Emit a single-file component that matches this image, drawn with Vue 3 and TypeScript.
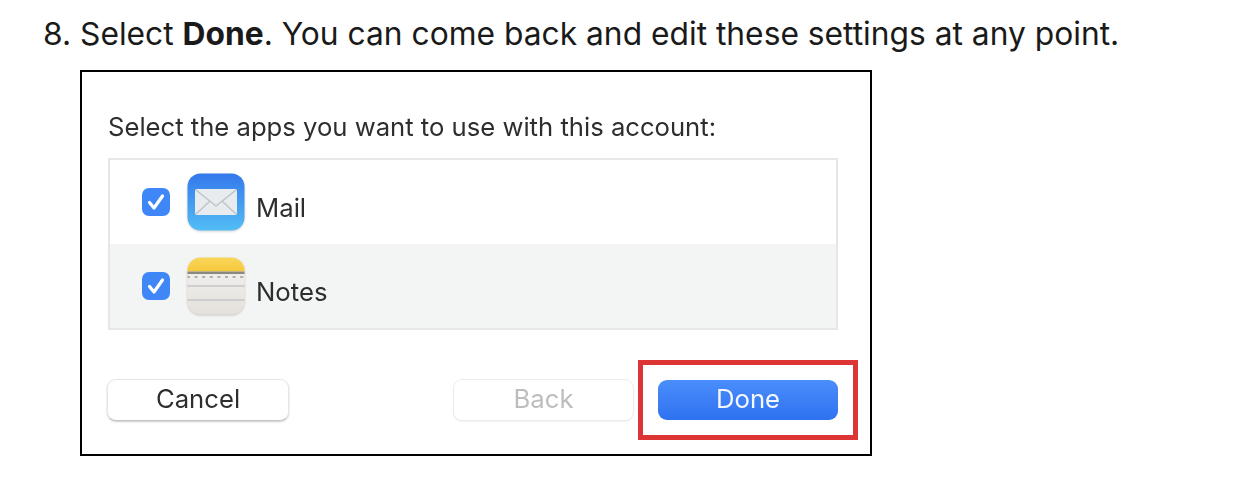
<template>
  <div class="page">
    <p class="step">
      <span class="num">8.</span> Select <strong>Done</strong>. You can come back and edit these settings at any point.
    </p>
    <div class="shot">
      <div class="dialog">
        <div class="prompt">Select the apps you want to use with this account:</div>
        <div class="app-list">
          <div v-for="app in apps" :key="app.name" class="app-row">
            <span class="check">
              <svg width="24" height="24" viewBox="0 0 24 24">
                <path d="M5.5 12.5 L10 18 L18.5 6" fill="none" stroke="#fff" stroke-width="3.2" stroke-linecap="round" stroke-linejoin="round" />
              </svg>
            </span>
            <svg v-if="app.name === 'Mail'" class="app-icon" width="58" height="58" viewBox="0 0 58 58">
              <defs>
                <linearGradient id="mailBg" x1="0" y1="0" x2="0" y2="1">
                  <stop offset="0" stop-color="#3478ec" />
                  <stop offset="1" stop-color="#53bdf5" />
                </linearGradient>
              </defs>
              <rect x="0.5" y="0.5" width="57" height="57" rx="13" fill="url(#mailBg)" />
              <rect x="8" y="16" width="42" height="26" rx="2" fill="#e9ecee" />
              <path d="M9 17 L29 33 L49 17 M9 41 L23 28 M49 41 L35 28" fill="none" stroke="#bfc6ce" stroke-width="1.6" />
            </svg>
            <svg v-else class="app-icon" width="58" height="58" viewBox="0 0 58 58">
              <defs>
                <linearGradient id="noteBg" x1="0" y1="0" x2="0" y2="1">
                  <stop offset="0" stop-color="#f5f3f1" />
                  <stop offset="1" stop-color="#e4e1dc" />
                </linearGradient>
                <linearGradient id="noteTop" x1="0" y1="0" x2="0" y2="1">
                  <stop offset="0" stop-color="#f9d65c" />
                  <stop offset="1" stop-color="#f6c93a" />
                </linearGradient>
                <clipPath id="noteClip"><rect x="0.5" y="0.5" width="57" height="57" rx="13" /></clipPath>
              </defs>
              <g clip-path="url(#noteClip)">
                <rect width="58" height="58" fill="url(#noteBg)" />
                <rect width="58" height="14.5" fill="url(#noteTop)" />
                <rect y="14.5" width="58" height="2.5" fill="#8a8881" />
                <path d="M0 20 H58" stroke="#b0adab" stroke-width="1.8" stroke-dasharray="3 4.6" />
                <path d="M0 29 H58 M0 43 H58" stroke="#c6c4c6" stroke-width="1.6" />
              </g>
            </svg>
            <span class="app-name">{{ app.name }}</span>
          </div>
        </div>
        <div class="actions">
          <button class="btn">Cancel</button>
          <div class="right-actions">
            <button class="btn btn-disabled">Back</button>
            <div class="highlight">
              <button class="btn btn-primary">Done</button>
            </div>
          </div>
        </div>
      </div>
    </div>
  </div>
</template>

<script setup lang="ts">
interface App {
  name: string;
}

const apps: App[] = [{ name: 'Mail' }, { name: 'Notes' }];
</script>

<style>
html,
body {
  background: #fff;
  overflow: hidden;
}
</style>

<style scoped>
.page {
  width: 1260px;
  height: 502px;
  padding-top: 14px;
  box-sizing: border-box;
  font-family: Inter, "Liberation Sans", sans-serif;
  color: #1a1a1a;
}

.step {
  margin: 0 0 0 43px;
  font-size: 31.75px;
  line-height: 40px;
  white-space: nowrap;
}

.step strong {
  font-weight: 700;
}

.shot {
  margin: 16px 0 0 80px;
  width: 792px;
  height: 386px;
  box-sizing: border-box;
  border: 2px solid #000;
  background: #fff;
  overflow: hidden;
}

.dialog {
  padding: 38px 34px 0 26px;
  color: #2e2e2e;
}

.prompt {
  font-size: 25.65px;
  line-height: 34px;
  white-space: nowrap;
  margin-bottom: 14px;
  filter: blur(0.6px);
}

.app-list {
  border: 2px solid #e6e8e8;
  width: 730px;
  box-sizing: border-box;
}

.app-row {
  display: flex;
  align-items: center;
  height: 84px;
  padding-left: 32px;
}

.app-row:nth-child(2) {
  background: #f3f5f4;
}

.check {
  width: 28px;
  height: 28px;
  border-radius: 7px;
  background: #3f86f7;
  display: flex;
  align-items: center;
  justify-content: center;
  filter: blur(0.6px);
}

.app-icon {
  margin-left: 17px;
  filter: blur(0.6px) drop-shadow(0 1px 1px rgba(0, 0, 0, 0.18));
}

.app-name {
  margin-left: 11px;
  font-size: 25.7px;
  margin-top: 10px;
  filter: blur(0.6px);
}

.actions {
  display: flex;
  justify-content: space-between;
  align-items: center;
  margin-top: 30px;
  width: 750px;
}

.right-actions {
  display: flex;
  align-items: center;
  gap: 4px;
}

.btn {
  width: 182px;
  height: 42px;
  margin-left: -1px;
  border-radius: 9px;
  border: 1px solid #e6e6e6;
  border-bottom-color: #c4c4c4;
  box-shadow: 0 1px 2px rgba(0, 0, 0, 0.2);
  background: #fff;
  font-family: Inter, "Liberation Sans", sans-serif;
  font-size: 25.7px;
  line-height: 38px;
  color: #2e2e2e;
  padding: 0 0 3px;
  filter: blur(0.5px);
}

.btn-disabled {
  width: 181px;
  margin-left: 0;
  color: #bdbdbd;
  border-color: #ececec;
  box-shadow: 0 1px 1px rgba(0, 0, 0, 0.06);
}

.highlight {
  border: 5px solid #dc3533;
  width: 220px;
  height: 80px;
  box-sizing: border-box;
  display: flex;
  align-items: center;
  justify-content: center;
}

.btn-primary {
  width: 180px;
  height: 40px;
  margin-left: 0;
  border: none;
  color: #f4f8ff;
  background: linear-gradient(#4a8dfb, #2f72f0);
  box-shadow: none;
}
</style>
